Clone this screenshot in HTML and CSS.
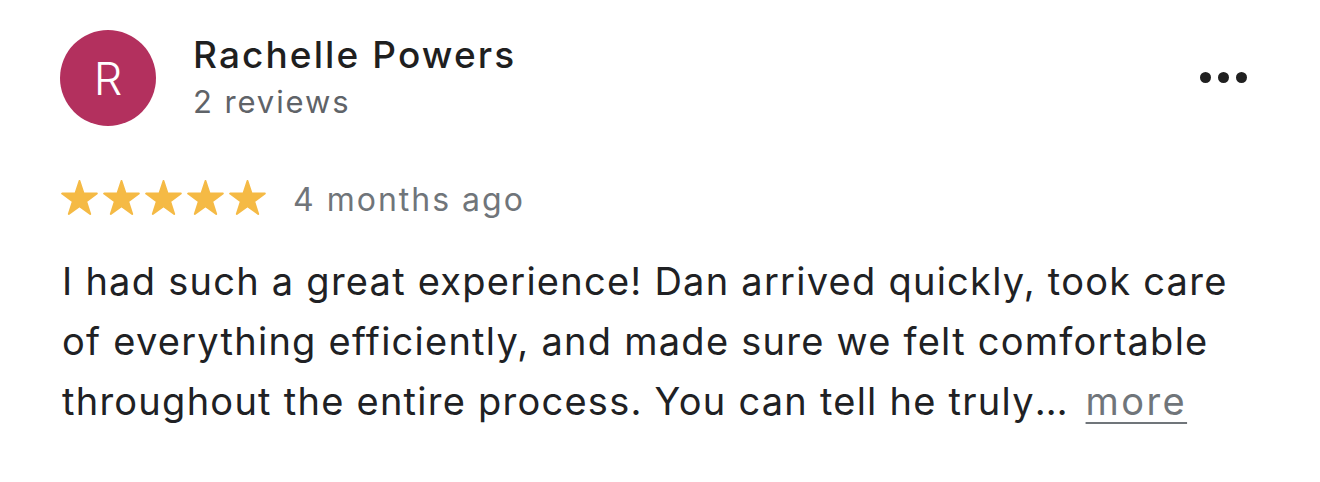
FILE: index.html
```html
<!DOCTYPE html>
<html lang="en">
<head>
    <meta charset="UTF-8">
    <meta name="viewport" content="width=device-width, initial-scale=1.0">
    <title>Review</title>
    <link rel="stylesheet" href="styles.css">
</head>
<body>
    <div class="review">
        <div class="review-header">
            <div class="avatar">R</div>
            <div class="author">
                <div class="author-name">Rachelle Powers</div>
                <div class="author-meta">2 reviews</div>
            </div>
            <button class="more-btn" aria-label="More options">
                <span class="dot"></span>
                <span class="dot"></span>
                <span class="dot"></span>
            </button>
        </div>

        <div class="rating-row">
            <div class="stars">
                <svg class="star" viewBox="-1 -1 38 36.3"><path d="M18 0L22.25 13.08L36 13.08L24.88 21.16L29.13 34.24L18 26.16L6.87 34.24L11.12 21.16L0 13.08L13.75 13.08Z"/></svg>
                <svg class="star" viewBox="-1 -1 38 36.3"><path d="M18 0L22.25 13.08L36 13.08L24.88 21.16L29.13 34.24L18 26.16L6.87 34.24L11.12 21.16L0 13.08L13.75 13.08Z"/></svg>
                <svg class="star" viewBox="-1 -1 38 36.3"><path d="M18 0L22.25 13.08L36 13.08L24.88 21.16L29.13 34.24L18 26.16L6.87 34.24L11.12 21.16L0 13.08L13.75 13.08Z"/></svg>
                <svg class="star" viewBox="-1 -1 38 36.3"><path d="M18 0L22.25 13.08L36 13.08L24.88 21.16L29.13 34.24L18 26.16L6.87 34.24L11.12 21.16L0 13.08L13.75 13.08Z"/></svg>
                <svg class="star" viewBox="-1 -1 38 36.3"><path d="M18 0L22.25 13.08L36 13.08L24.88 21.16L29.13 34.24L18 26.16L6.87 34.24L11.12 21.16L0 13.08L13.75 13.08Z"/></svg>
            </div>
            <div class="review-date">4 months ago</div>
        </div>

        <p class="review-text">
            I had such a great experience! Dan arrived quickly, took care<br>
            of everything efficiently, and made sure we felt comfortable<br>
            throughout the entire process. You can tell he truly<span class="ellipsis">…</span> <a href="#" class="more-link">more</a>
        </p>
    </div>
</body>
</html>
```

FILE: styles.css
```css
* {
    margin: 0;
    padding: 0;
    box-sizing: border-box;
}

body {
    width: 1320px;
    height: 482px;
    background: #ffffff;
    font-family: Inter, 'Noto Sans', sans-serif;
    color: #1f1f1f;
}

.review {
    padding: 30px 73px 0 60px;
}

.review-header {
    display: flex;
    align-items: flex-start;
}

.avatar {
    width: 96px;
    height: 96px;
    border-radius: 50%;
    background: #b3305e;
    color: white;
    font-size: 45px;
    font-weight: 300;
    display: flex;
    align-items: center;
    justify-content: center;
    flex-shrink: 0;
}

.author {
    margin-left: 37px;
    padding-top: 2px;
    flex: 1;
}

.author-name {
    font-size: 37px;
    font-weight: 500;
    line-height: 45px;
    letter-spacing: 2.1px;
    color: #1f1f1f;
}

.author-meta {
    margin-top: 5px;
    font-size: 31px;
    line-height: 40px;
    letter-spacing: 1.9px;
    color: #5f6368;
}

.more-btn {
    display: flex;
    gap: 7px;
    margin-top: 42px;
    background: transparent;
    border: none;
    cursor: pointer;
}

.dot {
    width: 11px;
    height: 11px;
    border-radius: 50%;
    background: #202020;
}

.rating-row {
    display: flex;
    align-items: flex-start;
    margin-top: 54px;
}

.stars {
    display: flex;
    gap: 5px;
    padding-left: 1px;
}

.star {
    width: 37px;
    height: 35px;
    fill: #f5ba45;
    stroke: #f5ba45;
    stroke-width: 2;
    stroke-linejoin: round;
}

.review-date {
    margin-left: 27px;
    padding-top: 2px;
    font-size: 32px;
    line-height: 35px;
    letter-spacing: 2px;
    color: #70757a;
}

.review-text {
    margin-top: 34px;
    padding-left: 2px;
    font-size: 38px;
    line-height: 60px;
    letter-spacing: 1.25px;
    color: #202124;
}

.ellipsis {
    letter-spacing: 4px;
}

.more-link {
    margin-left: 2px;
    color: #70757a;
    letter-spacing: 2.4px;
    text-decoration: underline;
    text-underline-offset: 7px;
    text-decoration-thickness: 2px;
}
```
